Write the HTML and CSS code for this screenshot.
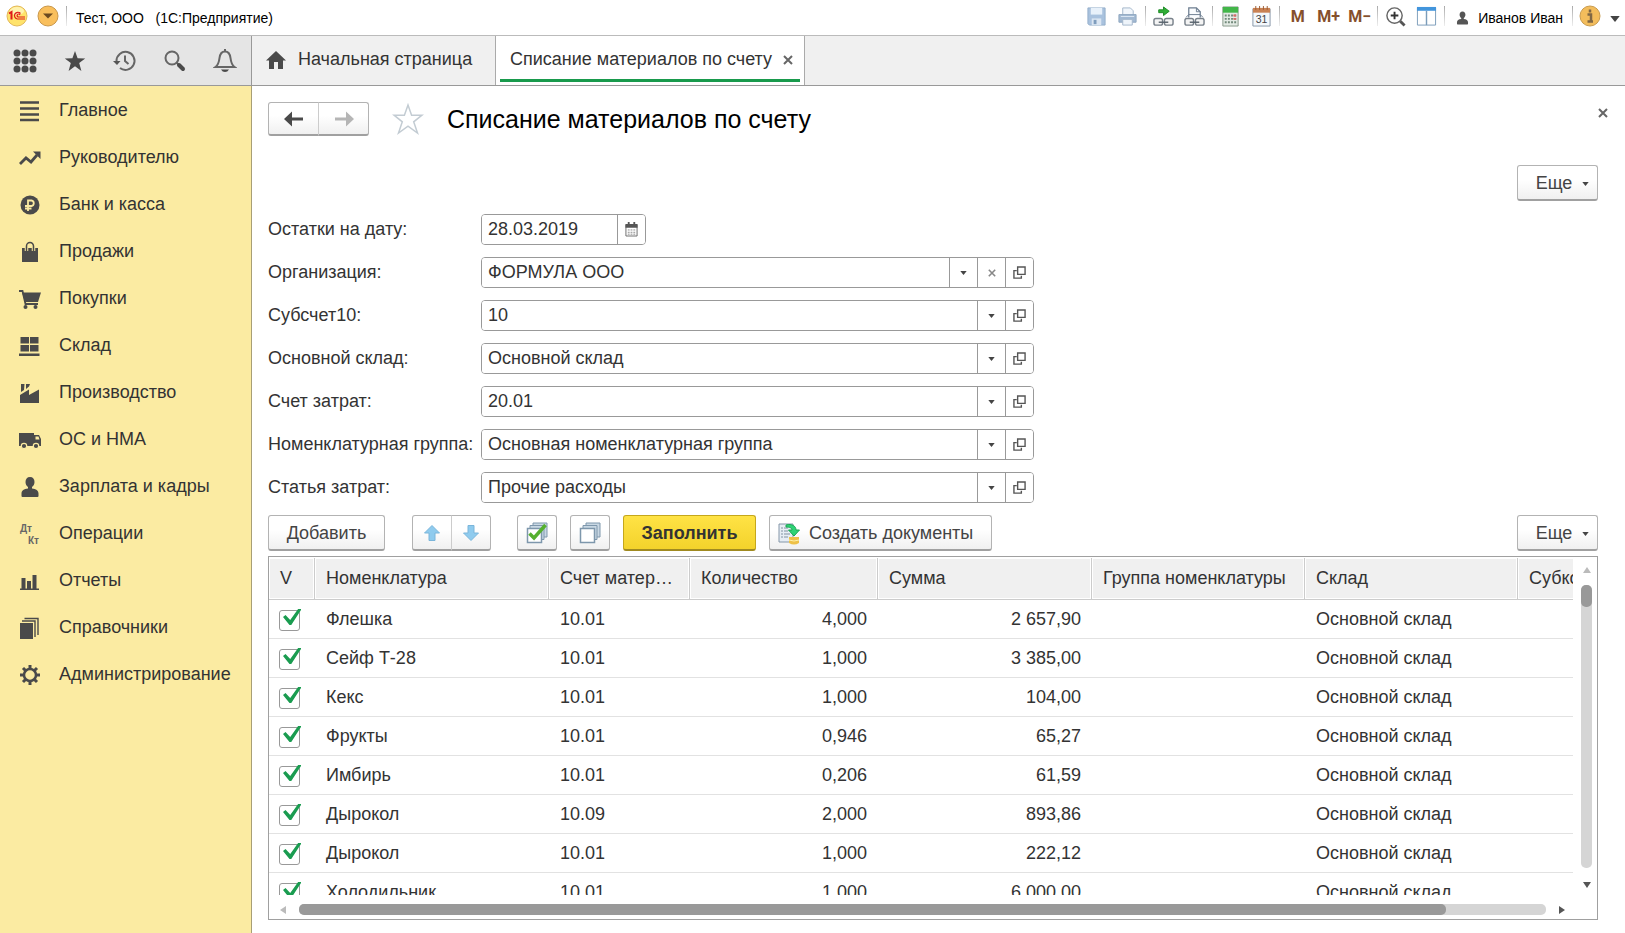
FILE: index.html
```html
<!DOCTYPE html>
<html lang="ru">
<head>
    <meta charset="UTF-8">
    <meta name="viewport" content="width=device-width, initial-scale=1.0">
    <title>Списание материалов по счету</title>
    <link rel="stylesheet" href="styles.css">
</head>
<body>
    <!-- shared icons -->
    <svg class="sprite" aria-hidden="true">
        <symbol id="down" viewBox="0 0 8 5"><path d="M0 0h8L4 5z" fill="currentColor"/></symbol>
        <symbol id="open" viewBox="0 0 14 14"><path d="M5 1h8v8H5z M4 5H1v8h8v-2.500" fill="none" stroke="#555" stroke-width="1.500"/></symbol>
        <symbol id="cross" viewBox="0 0 10 10"><path d="M1 1l8 8M9 1l-8 8" fill="none" stroke="currentColor" stroke-width="2"/></symbol>
        <symbol id="person" viewBox="0 0 20 20"><path d="M10 0c3 0 4.500 2 4.500 5 0 2-1 4-2.500 5v1.500c4 .5 6.500 2 6.500 5V19q0 1-1 1h-15q-1 0-1-1v-2.500c0-3 2.500-4.500 6.500-5V10C6.500 9 5.500 7 5.500 5 5.500 2 7 0 10 0z" fill="currentColor"/></symbol>
    </svg>

    <header class="titlebar">
        <svg class="logo" viewBox="0 0 22 22">
            <circle cx="11" cy="11" r="10" fill="#ffe36b" stroke="#e3b95a"/>
            <ellipse cx="11" cy="6" rx="7" ry="4" fill="#fff3b0"/>
            <path d="M3 8.500l2.500-1.500v7.500" fill="none" stroke="#e01b1b" stroke-width="2"/>
            <path d="M14.500 8.500a3.400 3.400 0 1 0-3.300 5.500H19M14 10a1.500 1.500 0 1 0-1.500 2H19" fill="none" stroke="#e01b1b" stroke-width="1.200"/>
        </svg>
        <button class="plain" aria-label="Меню">
            <svg width="22" height="22" viewBox="0 0 22 22"><circle cx="11" cy="11" r="10" fill="#f9bf5c" stroke="#c9974a"/><path d="M6 8.500h10l-5 5z" fill="#6b4a20"/></svg>
        </button>
        <span class="sep"></span>
        <span class="app-name">Тест, ООО &nbsp; (1С:Предприятие)</span>

        <div class="tools">
            <button class="tool" aria-label="Сохранить">
                <svg viewBox="0 0 22 22"><path d="M2 2h18v18H3.500L2 18.500z" fill="#a9c2de" stroke="#93aeca"/><path d="M5 2h12v7H5z" fill="#e8f1fa"/><path d="M6 13h10v7H6z" fill="#dbe6f2"/><path d="M8 14.500h3V19H8z" fill="#7f9dbd"/></svg>
            </button>
            <button class="tool" aria-label="Печать">
                <svg viewBox="0 0 22 22"><path d="M6 2h8l3 3v5H6z" fill="#f1f6fb" stroke="#a4b7cb"/><path d="M2 9h18v8H2z" fill="#a2b9d2" stroke="#8fa7c0"/><path d="M4 11h14" stroke="#dbe7f3"/><path d="M6 14h10v6H6z" fill="#eef4fa" stroke="#a4b7cb"/></svg>
            </button>
            <span class="sep"></span>
            <button class="tool" aria-label="Получить ссылку">
                <svg viewBox="0 0 22 22"><path d="M6 4h5V1l6 4.500L11 10V7H6z" fill="#2fae35" stroke="#1c8a26"/><rect x="1" y="13" width="9" height="7" rx="2" fill="#f4f4f4" stroke="#78818a" stroke-width="1.500"/><rect x="12" y="13" width="9" height="7" rx="2" fill="#f4f4f4" stroke="#78818a" stroke-width="1.500"/><path d="M6 17h10" stroke="#59636d" stroke-width="1.500"/></svg>
            </button>
            <button class="tool" aria-label="Перейти по ссылке">
                <svg viewBox="0 0 22 22"><path d="M5 12V2h8l4 4v6" fill="#fafcfe" stroke="#6c7d90" stroke-width="1.300"/><path d="M13 2v4h4M2 12l3-3h12l3 3" fill="none" stroke="#6c7d90"/><rect x="1" y="13" width="9" height="7" rx="2" fill="#f4f4f4" stroke="#78818a" stroke-width="1.500"/><rect x="12" y="13" width="9" height="7" rx="2" fill="#f4f4f4" stroke="#78818a" stroke-width="1.500"/><path d="M6 17h10" stroke="#59636d" stroke-width="1.500"/></svg>
            </button>
            <span class="sep"></span>
            <button class="tool" aria-label="Калькулятор">
                <svg viewBox="0 0 22 22"><path d="M3 1h16v20H3z" fill="#e3eae4" stroke="#87998b"/><path d="M3 1h16v6H3z" fill="#42b649"/><path d="M5 10h12M5 13.500h12M5 17h12" stroke="#71897a" stroke-width="2" stroke-dasharray="2 1.300"/><path d="M14 10h3M14 13.500h3" stroke="#dc6969" stroke-width="2"/></svg>
            </button>
            <button class="tool" aria-label="Календарь">
                <svg viewBox="0 0 22 22"><path d="M2 3h18v18H2z" fill="#f4f8fc" stroke="#8797a8"/><path d="M2 2h18v5H2z" fill="#c98254"/><path d="M5 0v4M9 0v4M13 0v4M17 0v4" stroke="#9c5a32"/><text x="11" y="18" text-anchor="middle" class="cal-day">31</text></svg>
            </button>
            <span class="sep"></span>
            <button class="tool memory">M</button>
            <button class="tool memory">M+</button>
            <button class="tool memory">M−</button>
            <span class="sep"></span>
            <button class="tool" aria-label="Масштаб">
                <svg viewBox="0 0 22 22"><circle cx="10" cy="10" r="8" fill="#fff" stroke="#666" stroke-width="1.500"/><path d="M10 6v8M6 10h8" stroke="#333" stroke-width="2"/><path d="M16 16l4.500 4.500" stroke="#555" stroke-width="3"/></svg>
            </button>
            <button class="tool" aria-label="Панели">
                <svg viewBox="0 0 22 22"><path d="M1.500 2h19v18h-19z" fill="#fff" stroke="#7b9cba"/><path d="M1 1h20v4H1z" fill="#4295dc"/><path d="M11 5v15" stroke="#7b9cba" stroke-width="1.500"/></svg>
            </button>
            <span class="sep"></span>
            <a class="user" href="#"><svg width="13" height="14"><use href="#person"/></svg>Иванов Иван</a>
            <span class="sep"></span>
            <button class="plain" aria-label="Справка">
                <svg width="22" height="22" viewBox="0 0 22 22"><circle cx="11" cy="11" r="10" fill="#f3bd5c" stroke="#c99c50"/><path d="M11 4.500v3M8.500 9.500H12v6.500M8.500 16.500h5.500" fill="none" stroke="#806744" stroke-width="2.500"/></svg>
            </button>
            <button class="plain info-menu" aria-label="Еще"><svg width="10" height="6" viewBox="0 0 8 5"><use href="#down"/></svg></button>
        </div>
    </header>

    <div class="topbar">
        <div class="quick">
            <button class="plain" aria-label="Меню функций">
                <svg width="24" height="24" viewBox="0 0 24 24" fill="#4a4a4a"><circle cx="4" cy="4" r="3.500"/><circle cx="12" cy="4" r="3.500"/><circle cx="20" cy="4" r="3.500"/><circle cx="4" cy="12" r="3.500"/><circle cx="12" cy="12" r="3.500"/><circle cx="20" cy="12" r="3.500"/><circle cx="4" cy="20" r="3.500"/><circle cx="12" cy="20" r="3.500"/><circle cx="20" cy="20" r="3.500"/></svg>
            </button>
            <button class="plain" aria-label="Избранное">
                <svg width="24" height="24" viewBox="0 0 24 24"><path d="M12 2l2.600 7.200 7.600.2-6 4.700L18.400 22 12 17.200 5.600 22l2.200-7.900-6-4.700 7.600-.2z" fill="#4a4a4a"/></svg>
            </button>
            <button class="plain" aria-label="История">
                <svg width="24" height="24" viewBox="0 0 24 24" fill="none" stroke="#666" stroke-width="2"><path d="M3.500 12a9 9 0 1 1 3.500 7"/><path d="M12 6.500V12l3.500 3"/><path d="M0 12h7.500L4 16z" fill="#555" stroke="none"/></svg>
            </button>
            <button class="plain" aria-label="Поиск">
                <svg width="24" height="24" viewBox="0 0 24 24" fill="none"><circle cx="9" cy="9" r="6.500" stroke="#666" stroke-width="2"/><path d="M13.500 13.500l3 3" stroke="#666" stroke-width="2"/><path d="M16 16l4 4" stroke="#4a4a4a" stroke-width="4" stroke-linecap="round"/></svg>
            </button>
            <button class="plain" aria-label="Оповещения">
                <svg width="24" height="24" viewBox="0 0 24 24"><path d="M2.500 18c3-2 3.500-5 4-9C7 5 9 2.500 12 2.500S17 5 17.500 9c.5 4 1 7 4 9z" fill="none" stroke="#666" stroke-width="2"/><path d="M12 0v3" stroke="#666" stroke-width="2"/><path d="M8 20.500h8q-1.500 2.500-4 2.500t-4-2.500z" fill="#4a4a4a"/></svg>
            </button>
        </div>
        <nav class="tabs">
            <a class="tab home" href="#">
                <svg width="20" height="20" viewBox="0 0 20 20"><path d="M10 1l10 9.500h-3V19h-5v-7H8v7H3v-8.500H0z" fill="#4a4a4a"/></svg>Начальная страница</a>
            <div class="tab active">
                <a href="#">Списание материалов по счету</a>
                <button class="plain" aria-label="Закрыть вкладку"><svg width="10" height="10"><use href="#cross"/></svg></button>
            </div>
        </nav>
    </div>

    <div class="workspace">
        <nav class="sidebar">
            <a href="#"><svg viewBox="0 0 22 22"><path d="M1 2.500h19M1 8.500h19M1 14.500h19M1 20h19" stroke-width="2.500" stroke="#4a4a4a"/></svg>Главное</a>
            <a href="#"><svg viewBox="0 0 22 22"><path d="M1 17l6-6 5 4 6-7" fill="none" stroke="#4a4a4a" stroke-width="2.800"/><path d="M14 4.500h7.500V12z" fill="#4a4a4a"/></svg>Руководителю</a>
            <a href="#"><svg viewBox="0 0 22 22"><circle cx="11" cy="11" r="9.500" fill="#4a4a4a"/><path d="M9 17V6.500h3.500a2.800 2.800 0 0 1 0 5.500H6M6 14.500h6.500" fill="none" stroke="#fbeba2" stroke-width="1.800"/></svg>Банк и касса</a>
            <a href="#"><svg viewBox="0 0 22 22"><path d="M3 7h16v14H3z" fill="#4a4a4a"/><path d="M7.500 10V5.500a3.500 3.500 0 0 1 7 0V10" fill="none" stroke="#fbeba2" stroke-width="3.500"/><path d="M7.500 10V5a3.500 3.500 0 0 1 7 0v5" fill="none" stroke="#4a4a4a" stroke-width="1.500"/></svg>Продажи</a>
            <a href="#"><svg viewBox="0 0 22 22"><path d="M0 3h3.500l3 13H19" fill="none" stroke="#4a4a4a" stroke-width="1.800"/><path d="M3 4.500h19L19 14H6z" fill="#4a4a4a"/><circle cx="6.500" cy="19" r="2" fill="#4a4a4a"/><circle cx="16.500" cy="19" r="2" fill="#4a4a4a"/></svg>Покупки</a>
            <a href="#"><svg viewBox="0 0 22 22"><path d="M1.500 2H10v6.500H1.500zM11 2h8.500v6.500H11zM1.500 10H10v6.500H1.500zM11 10h8.500v6.500H11zM0 18.500h20.500V21H0z" fill="#4a4a4a"/></svg>Склад</a>
            <a href="#"><svg viewBox="0 0 22 22"><path d="M1 21v-8l9-5.500V13l10-5.500V21zM2 2h3.500l-.5 6-3 2zM7 2h4l-1 2.500L7 7z" fill="#4a4a4a"/></svg>Производство</a>
            <a href="#"><svg viewBox="0 0 22 22"><path d="M0 4h15v13H0zM15 6h5l2 4v7h-7z" fill="#4a4a4a"/><path d="M16.500 7.500h3l1 3h-4z" fill="#fbeba2"/><g fill="#4a4a4a" stroke="#fbeba2" stroke-width="1.200"><circle cx="5" cy="17" r="2.700"/><circle cx="17" cy="17" r="2.700"/></g></svg>ОС и НМА</a>
            <a href="#"><svg viewBox="0 0 22 22" color="#4a4a4a"><use href="#person" x="1" y="1" width="20" height="20"/></svg>Зарплата и кадры</a>
            <a href="#"><svg viewBox="0 0 22 22" class="dtkt"><text x="1" y="9">Дт</text><text x="9" y="21">Кт</text></svg>Операции</a>
            <a href="#"><svg viewBox="0 0 22 22"><path d="M1 18.500h1.500V8h4v10.500H8V11h4v7.500h1.500V5h4v13.500H20V20H1z" fill="#4a4a4a"/></svg>Отчеты</a>
            <a href="#"><svg viewBox="0 0 22 22"><path d="M1 6h13v16H1z" fill="#4a4a4a"/><path d="M3 4h13v16M5.500 1.500H19V18" fill="none" stroke="#4a4a4a" stroke-width="1.400"/></svg>Справочники</a>
            <a href="#"><svg viewBox="0 0 22 22"><circle cx="11" cy="11" r="6" fill="none" stroke="#4a4a4a" stroke-width="2.500"/><path d="M11 1v4M11 17v4M1 11h4M17 11h4M4 4l2.500 2.500M15.500 15.500L18 18M4 18l2.500-2.500M15.500 6.500L18 4" stroke="#4a4a4a" stroke-width="3"/></svg>Администрирование</a>
        </nav>

        <main class="page">
            <div class="page-head">
                <div class="btn-group history">
                    <button class="btn" aria-label="Назад"><svg width="20" height="16" viewBox="0 0 20 16"><path d="M0 8l8-7.500V6.500h11v3H8v6z" fill="#4a4a4a"/></svg></button>
                    <button class="btn" aria-label="Вперед"><svg width="20" height="16" viewBox="0 0 20 16"><path d="M20 8l-8-7.500V6.500H1v3h11v6z" fill="#b5b5b5"/></svg></button>
                </div>
                <button class="plain fav" aria-label="В избранное"><svg width="32" height="32" viewBox="0 0 32 32"><path d="M16 2l3.600 10.200H30l-8.300 6.600L25.500 30 16 23.200 6.500 30l3.800-11.200L2 12.200h10.400z" fill="#fff" stroke="#c3ccd3" stroke-width="1.500"/></svg></button>
                <h1>Списание материалов по счету</h1>
                <button class="plain close" aria-label="Закрыть"><svg width="10" height="10"><use href="#cross"/></svg></button>
            </div>

            <div class="commands">
                <button class="btn more">Еще<svg width="7" height="4"><use href="#down"/></svg></button>
            </div>

            <form class="params">
                <label for="date">Остатки на дату:</label>
                <div class="field date">
                    <input type="text" id="date" value="28.03.2019">
                    <button type="button" aria-label="Календарь"><svg width="13" height="15" viewBox="0 0 14 16"><path d="M1 3h12v12H1z" fill="#fff" stroke="#666"/><path d="M.5 2h13v4H.5zM3 0h2v2H3zM9 0h2v2H9z" fill="#555"/><path d="M3 8.500h8M3 11h8M3 13h8" stroke="#888" stroke-dasharray="2 1"/></svg></button>
                </div>
                <label for="org">Организация:</label>
                <div class="field">
                    <input type="text" id="org" value="ФОРМУЛА ООО">
                    <button type="button" aria-label="Выбрать"><svg width="7" height="4"><use href="#down"/></svg></button>
                    <button type="button" class="clear" aria-label="Очистить"><svg width="8" height="8" viewBox="0 0 10 10"><use href="#cross"/></svg></button>
                    <button type="button" aria-label="Открыть"><svg width="13" height="13"><use href="#open"/></svg></button>
                </div>
                <label for="account">Субсчет10:</label>
                <div class="field">
                    <input type="text" id="account" value="10">
                    <button type="button" aria-label="Выбрать"><svg width="7" height="4"><use href="#down"/></svg></button>
                    <button type="button" aria-label="Открыть"><svg width="13" height="13"><use href="#open"/></svg></button>
                </div>
                <label for="store">Основной склад:</label>
                <div class="field">
                    <input type="text" id="store" value="Основной склад">
                    <button type="button" aria-label="Выбрать"><svg width="7" height="4"><use href="#down"/></svg></button>
                    <button type="button" aria-label="Открыть"><svg width="13" height="13"><use href="#open"/></svg></button>
                </div>
                <label for="cost">Счет затрат:</label>
                <div class="field">
                    <input type="text" id="cost" value="20.01">
                    <button type="button" aria-label="Выбрать"><svg width="7" height="4"><use href="#down"/></svg></button>
                    <button type="button" aria-label="Открыть"><svg width="13" height="13"><use href="#open"/></svg></button>
                </div>
                <label for="group">Номенклатурная группа:</label>
                <div class="field">
                    <input type="text" id="group" value="Основная номенклатурная группа">
                    <button type="button" aria-label="Выбрать"><svg width="7" height="4"><use href="#down"/></svg></button>
                    <button type="button" aria-label="Открыть"><svg width="13" height="13"><use href="#open"/></svg></button>
                </div>
                <label for="item">Статья затрат:</label>
                <div class="field">
                    <input type="text" id="item" value="Прочие расходы">
                    <button type="button" aria-label="Выбрать"><svg width="7" height="4"><use href="#down"/></svg></button>
                    <button type="button" aria-label="Открыть"><svg width="13" height="13"><use href="#open"/></svg></button>
                </div>
            </form>

            <div class="toolbar">
                <button class="btn add">Добавить</button>
                <div class="btn-group move">
                    <button class="btn" aria-label="Вверх"><svg width="16" height="16" viewBox="0 0 16 16"><path d="M8 .5L15.500 8H11v7.500H5V8H.5z" fill="#8fcbee" stroke="#7ab5da"/></svg></button>
                    <button class="btn" aria-label="Вниз"><svg width="16" height="16" viewBox="0 0 16 16"><path d="M8 15.500L.5 8H5V.5h6V8h4.500z" fill="#8fcbee" stroke="#7ab5da"/></svg></button>
                </div>
                <button class="btn icon" aria-label="Установить флажки"><svg width="22" height="22" viewBox="0 0 22 22"><g fill="#c9d8e4" stroke="#7e97ac"><path d="M7 1h14v14H7z"/><path d="M4 3.500h14v14H4z"/></g><path d="M1.500 6.500h14v14h-14z" fill="#fff" stroke="#7e97ac" stroke-width="1.500"/><path d="M3.500 11.500l4.500 4.500L19.500 3" fill="none" stroke="#55b02e" stroke-width="3.500"/></svg></button>
                <button class="btn icon" aria-label="Снять флажки"><svg width="22" height="22" viewBox="0 0 22 22"><g fill="#c9d8e4" stroke="#7e97ac"><path d="M7 1h14v14H7z"/><path d="M4 3.500h14v14H4z"/></g><path d="M1.500 6.500h14v14h-14z" fill="#fff" stroke="#7e97ac" stroke-width="1.500"/></svg></button>
                <button class="btn primary">Заполнить</button>
                <button class="btn create"><svg width="22" height="22" viewBox="0 0 22 22"><path d="M1 1h14v18H1z" fill="#e6edf4" stroke="#8496a8"/><path d="M3 5h2M3 8h2M3 11h2M3 14h2M6 5h4M6 8h4M6 11h6M6 14h4" stroke="#8292a2"/><path d="M11 14h10v6q-5 3-10 0z" fill="#eec148"/><path d="M11 17q5 2 10 0" fill="none" stroke="#fff0a8"/><path d="M8 2c6-1.500 10 1 10 5h3.500l-5.500 6-5.500-6H14c0-2-2-3-6-3z" fill="#2ed376" stroke="#1ba653"/></svg>Создать документы</button>
                <button class="btn more">Еще<svg width="7" height="4"><use href="#down"/></svg></button>
            </div>

            <div class="grid">
                <div class="grid-view">
                    <table>
                        <colgroup><col class="c-check"><col class="c-name"><col class="c-account"><col class="c-qty"><col class="c-sum"><col class="c-group"><col class="c-store"><col class="c-sub"></colgroup>
                        <thead>
                            <tr><th>V</th><th>Номенклатура</th><th>Счет материалов</th><th>Количество</th><th>Сумма</th><th>Группа номенклатуры</th><th>Склад</th><th>Субконто</th></tr>
                        </thead>
                        <tbody>
                            <tr><td><input type="checkbox" aria-label="Флешка" checked></td><td>Флешка</td><td>10.01</td><td class="num">4,000</td><td class="num">2 657,90</td><td></td><td>Основной склад</td><td></td></tr>
                            <tr><td><input type="checkbox" aria-label="Сейф Т-28" checked></td><td>Сейф Т-28</td><td>10.01</td><td class="num">1,000</td><td class="num">3 385,00</td><td></td><td>Основной склад</td><td></td></tr>
                            <tr><td><input type="checkbox" aria-label="Кекс" checked></td><td>Кекс</td><td>10.01</td><td class="num">1,000</td><td class="num">104,00</td><td></td><td>Основной склад</td><td></td></tr>
                            <tr><td><input type="checkbox" aria-label="Фрукты" checked></td><td>Фрукты</td><td>10.01</td><td class="num">0,946</td><td class="num">65,27</td><td></td><td>Основной склад</td><td></td></tr>
                            <tr><td><input type="checkbox" aria-label="Имбирь" checked></td><td>Имбирь</td><td>10.01</td><td class="num">0,206</td><td class="num">61,59</td><td></td><td>Основной склад</td><td></td></tr>
                            <tr><td><input type="checkbox" aria-label="Дырокол" checked></td><td>Дырокол</td><td>10.09</td><td class="num">2,000</td><td class="num">893,86</td><td></td><td>Основной склад</td><td></td></tr>
                            <tr><td><input type="checkbox" aria-label="Дырокол" checked></td><td>Дырокол</td><td>10.01</td><td class="num">1,000</td><td class="num">222,12</td><td></td><td>Основной склад</td><td></td></tr>
                            <tr><td><input type="checkbox" aria-label="Холодильник" checked></td><td>Холодильник</td><td>10.01</td><td class="num">1,000</td><td class="num">6 000,00</td><td></td><td>Основной склад</td><td></td></tr>
                        </tbody>
                    </table>
                </div>
                <div class="vscroll">
                    <span class="arrow up"></span>
                    <div class="track"><div class="thumb"></div></div>
                    <span class="arrow down"></span>
                </div>
                <div class="hscroll">
                    <span class="arrow left"></span>
                    <div class="track"><div class="thumb"></div></div>
                    <span class="arrow right"></span>
                </div>
            </div>
        </main>
    </div>
</body>
</html>
```
FILE: styles.css
```css
* {
    box-sizing: border-box;
}
body {
    display: flex;
    flex-direction: column;
    height: 100vh;
    margin: 0;
    font-family: "Liberation Sans", Arial, sans-serif;
    font-size: 18px;
    color: #333;
    background: #fff;
}
a {
    color: inherit;
    text-decoration: none;
}
button, input {
    font: inherit;
    color: inherit;
}
button {
    display: flex;
    align-items: center;
    justify-content: center;
    padding: 0;
    cursor: pointer;
}
svg {
    flex: none;
}
.sprite {
    display: none;
}
.plain {
    border: none;
    background: none;
}

/* window title */
.titlebar {
    display: flex;
    align-items: center;
    flex: none;
    height: 36px;
    padding: 0 5px 3px 6px;
    border-bottom: 1px solid #bbb;
    font-size: 14px;
    color: #000;
}
.logo {
    width: 22px;
    height: 22px;
    margin-right: 9px;
}
.sep {
    width: 1px;
    height: 20px;
    margin: 0 2px;
    background: linear-gradient(#aaa, #eee);
}
.titlebar > .sep {
    margin: 0 9px 0 7px;
}
.app-name {
    padding-top: 3px;
}
.tools {
    display: flex;
    align-items: center;
    margin-left: auto;
}
.tool {
    width: 31px;
    height: 28px;
    border: none;
    background: none;
}
.tool svg {
    width: 21px;
    height: 21px;
}
.cal-day {
    font-size: 11px;
    fill: #444;
}
.memory {
    font-family: Roboto, sans-serif;
    font-size: 16px;
    font-weight: bold;
    color: #85502c;
}
.user {
    display: flex;
    align-items: center;
    gap: 9px;
    padding: 3px 7px 0 9px;
}
.user svg {
    color: #555;
}
.tools > .plain {
    margin-left: 4px;
}
.tools > .info-menu {
    margin-left: 9px;
    padding-top: 6px;
    color: #444;
}

/* quick buttons and tabs */
.topbar {
    display: flex;
    flex: none;
    height: 50px;
    border-bottom: 1px solid #999;
    background: #f0f0f0;
}
.quick {
    display: flex;
    flex: none;
    width: 252px;
    border-right: 1px solid #999;
    background: #e5e5e5;
}
.quick button {
    width: 50px;
}
.tabs {
    display: flex;
}
.tab {
    display: flex;
    align-items: center;
    padding-bottom: 2px;
    border-right: 1px solid #aaa;
}
.home {
    gap: 12px;
    width: 244px;
    padding-left: 14px;
}
.active {
    position: relative;
    justify-content: space-between;
    width: 309px;
    padding: 0 11px 2px 14px;
    background: #fff;
}
.active::after {
    content: "";
    position: absolute;
    left: 4px;
    right: 4px;
    bottom: 3px;
    height: 3px;
    background: #189a4c;
}
.active button, .close {
    color: #666;
}

.workspace {
    display: flex;
    flex: 1;
    min-height: 0;
}
.sidebar {
    flex: none;
    width: 252px;
    padding-top: 1px;
    border-right: 1px solid #a89f75;
    background: #fbeba2;
}
.sidebar a {
    display: flex;
    align-items: center;
    gap: 18px;
    height: 47px;
    padding-left: 19px;
}
.sidebar svg {
    width: 22px;
    height: 22px;
}
.dtkt {
    font-size: 10px;
    font-weight: bold;
    fill: #666;
}

/* page */
.page {
    display: flex;
    flex-direction: column;
    flex: 1;
    min-width: 0;
    padding: 16px 27px 13px 16px;
}
.page-head {
    display: flex;
    align-items: center;
    flex: none;
    height: 34px;
}
h1 {
    margin: 0;
    font-size: 25px;
    font-weight: normal;
    color: #000;
}
.fav {
    margin: 0 23px;
}
.close {
    margin: 0 -10px 12px auto;
}
.btn {
    height: 36px;
    padding: 2px 0 0;
    border: 1px solid #b3b3b3;
    border-bottom: 2px solid #a0a0a0;
    border-radius: 3px;
    background: linear-gradient(#fff 40%, #f0f0f0);
    color: #444;
}
.btn-group {
    display: flex;
}
.btn-group .btn + .btn {
    margin-left: -1px;
    border-left-color: #ccc;
    border-radius: 0 3px 3px 0;
}
.btn-group .btn:first-child {
    border-radius: 3px 0 0 3px;
}
.history .btn {
    width: 51px;
    height: 34px;
    padding: 0;
}
.more {
    gap: 10px;
    width: 81px;
    padding-left: 10px;
}
.commands {
    display: flex;
    justify-content: flex-end;
    flex: none;
    margin: 29px 0 13px;
}

.params {
    display: grid;
    grid-template-columns: 213px minmax(0, 553px);
    row-gap: 12px;
    align-items: center;
    margin: 0;
}
.params label {
    white-space: nowrap;
}
.field {
    display: flex;
    height: 31px;
    border: 1px solid #999;
    border-radius: 4px;
    overflow: hidden;
}
.field input {
    flex: 1;
    min-width: 0;
    padding: 0 6px;
    border: none;
    outline: none;
    background: #fff;
}
.field button {
    flex: none;
    width: 28px;
    border: none;
    border-left: 1px solid #999;
    background: #fff;
    color: #444;
}
.field .clear {
    color: #888;
}
.date {
    width: 165px;
}

.toolbar {
    display: flex;
    flex: none;
    margin: 12px 0 5px;
}
.add {
    width: 117px;
}
.move {
    margin: 0 26px 0 27px;
}
.move .btn, .icon {
    width: 40px;
    padding: 0;
}
.icon {
    margin-right: 13px;
}
.primary {
    width: 133px;
    margin-right: 13px;
    border-color: #c5a71c;
    border-bottom-color: #a08a20;
    background: linear-gradient(#ffe345, #f3d22b);
    font-weight: bold;
    color: #333;
}
.create {
    justify-content: flex-start;
    gap: 9px;
    width: 223px;
    padding-left: 8px;
}
.toolbar .more {
    margin-left: auto;
}

/* table of materials */
.grid {
    display: grid;
    grid-template-columns: minmax(0, 1fr) 24px;
    grid-template-rows: minmax(0, 1fr) 24px;
    flex: 1;
    min-height: 0;
    border: 1px solid #a0a0a0;
}
.grid-view {
    padding-top: 1px;
    overflow: hidden;
}
table {
    width: 1401px;
    table-layout: fixed;
    border-collapse: separate;
    border-spacing: 0;
}
.c-check { width: 46px; }
.c-name { width: 234px; }
.c-account { width: 141px; }
.c-qty { width: 188px; }
.c-sum { width: 214px; }
.c-group { width: 213px; }
.c-store { width: 213px; }
.c-sub { width: 152px; }
th {
    height: 42px;
    padding: 0 11px;
    border-right: 1px solid #ccc;
    border-bottom: 1px solid #ccc;
    box-shadow: inset 1px 1px #fff, inset -1px -1px #fff;
    background: #f0f0f0;
    font-weight: normal;
    text-align: left;
    white-space: nowrap;
    overflow: hidden;
    text-overflow: ellipsis;
}
td {
    height: 39px;
    padding: 0 11px;
    border-bottom: 1px solid #e2e2e2;
    white-space: nowrap;
}
td:first-child {
    padding: 0 10px;
}
.num {
    text-align: right;
}
td input {
    appearance: none;
    display: block;
    position: relative;
    width: 21px;
    height: 21px;
    margin: 3px 0 0;
    border: 1px solid #999;
    border-radius: 3px;
    background: #fff;
}
td input:checked::after {
    content: "";
    position: absolute;
    left: 3px;
    top: -2px;
    width: 18px;
    height: 16px;
    background: #1a9c50;
    clip-path: polygon(0 50%, 14% 38%, 40% 68%, 84% 0, 100% 0, 100% 6%, 46% 100%, 36% 100%);
}

.track {
    border-radius: 5px;
    background: #d5d5d5;
}
.thumb {
    border-radius: 5px;
    background: #999;
}
.arrow {
    width: 0;
    height: 0;
    border: 4px solid transparent;
}
.vscroll {
    display: flex;
    flex-direction: column;
    align-items: center;
    padding: 6px 0 2px 3px;
}
.vscroll .track {
    flex: 1;
    width: 11px;
    margin: 12px 0;
}
.vscroll .thumb {
    height: 22px;
}
.up {
    border-bottom: 6px solid #bbb;
    border-top: none;
    margin-top: 4px;
}
.down {
    border-top: 6px solid #555;
    border-bottom: none;
    margin: 2px 0 5px;
}
.hscroll {
    display: flex;
    align-items: center;
    grid-column: 1 / -1;
    padding: 5px 32px 0 11px;
}
.hscroll .track {
    flex: 1;
    height: 11px;
    margin: 0 13px;
}
.hscroll .thumb {
    width: 92%;
    height: 11px;
}
.left {
    border-right: 6px solid #bbb;
    border-left: none;
}
.right {
    border-left: 6px solid #555;
    border-right: none;
}
```
